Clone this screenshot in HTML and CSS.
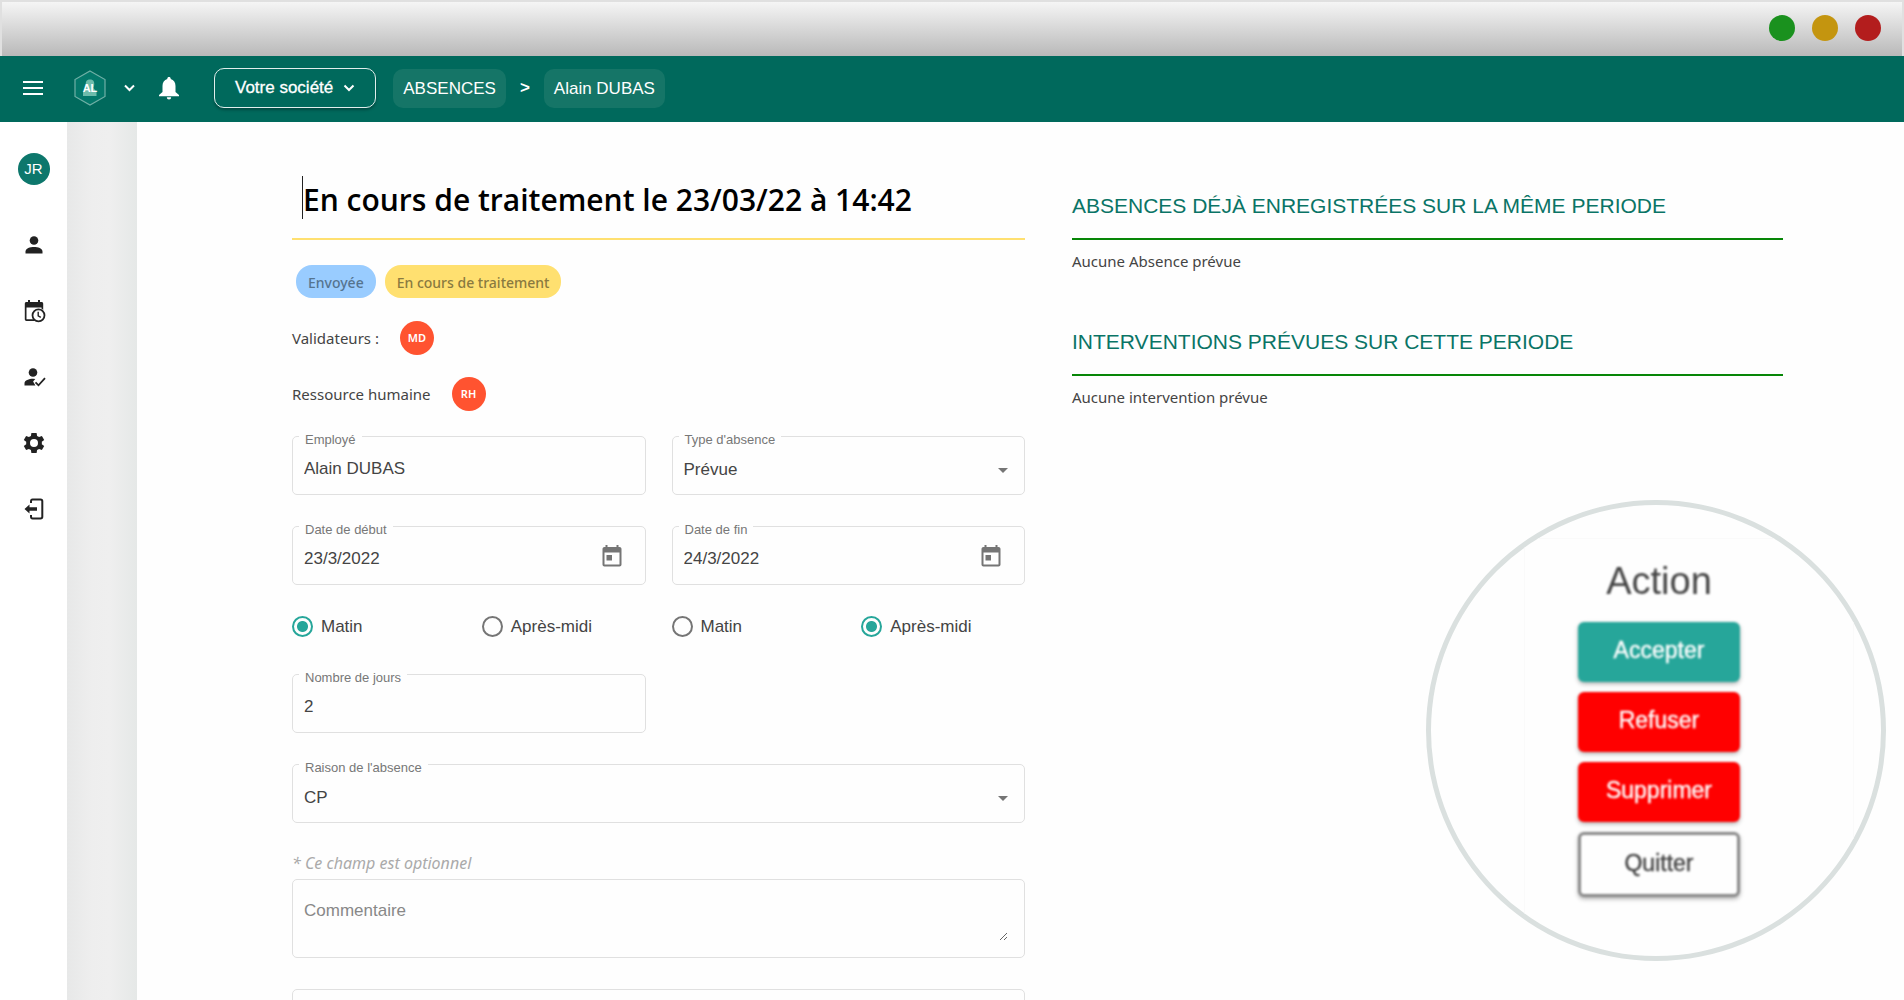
FILE: index.html
```html
<!DOCTYPE html>
<html lang="fr">
<head>
<meta charset="utf-8">
<title>Absences - Alain DUBAS</title>
<link rel="stylesheet" href="styles.css">
</head>
<body>
<div class="window">
  <div class="titlebar">
    <span class="dot dot-green"></span>
    <span class="dot dot-yellow"></span>
    <span class="dot dot-red"></span>
  </div>

  <header class="topbar">
    <button class="icon-btn menu-btn" aria-label="Menu"><svg width="20" height="14" viewBox="0 0 20 14"><path d="M0 1h20M0 7h20M0 13h20" stroke="#fff" stroke-width="2"/></svg></button>
    <button class="icon-btn logo-btn" aria-label="Compte">
      <svg width="32" height="36" viewBox="0 0 32 36">
        <path d="M16 1 31 9.500v17L16 35 1 26.500v-17z" fill="#04786a" stroke="#6fb0a6" stroke-width="1.200"/>
        <path d="M12.500 18c-2-6 0-8.500 3.500-8.500s5.500 2.500 3.500 8.500l3 4v4H9v-4z" fill="#6dbcab"/>
        <text x="16" y="22" text-anchor="middle" class="logo-text">AL</text>
      </svg>
      <svg width="11" height="8" viewBox="0 0 11 8"><path d="M1 1.500 5.500 6 10 1.500" fill="none" stroke="#fff" stroke-width="2"/></svg>
    </button>
    <button class="icon-btn bell-btn" aria-label="Notifications"><svg width="20" height="24" viewBox="0 0 20 24"><path d="M10 1c-1 0-1.700.700-1.700 1.600v.5C5.200 3.900 3.500 6.700 3.500 10v6L0 19v1.300h20V19l-3.500-3v-6c0-3.300-1.700-6.100-4.800-6.900v-.5C11.700 1.700 11 1 10 1zM7.800 21.300a2.200 2.200 0 0 0 4.400 0z" fill="#fff"/></svg></button>
    <button class="company">Votre société <svg width="12" height="8" viewBox="0 0 12 8"><path d="M1.500 1.500 6 6l4.500-4.500" fill="none" stroke="#fff" stroke-width="2"/></svg></button>
    <nav class="crumbs">
      <a class="crumb" href="#">ABSENCES</a>
      <span class="crumb-sep">&gt;</span>
      <a class="crumb" href="#">Alain DUBAS</a>
    </nav>
  </header>

  <div class="body">
    <nav class="sidebar">
      <a class="avatar" href="#">JR</a>
      <a href="#" aria-label="Employés"><svg viewBox="0 0 24 24"><circle cx="12" cy="7.500" r="4.300"/><path d="M3.500 20.500v-2c0-3.200 4.500-4.500 8.500-4.500s8.500 1.300 8.500 4.500v2z"/></svg></a>
      <a href="#" aria-label="Absences"><svg viewBox="0 0 24 24"><path fill-rule="evenodd" d="M4.500 3H6V1h2v2h8V1h2v2h1.500c1 0 1.700.700 1.700 1.700V11a6.500 6.500 0 0 0-1.700-1.300V8.500h-15v11.800h7.300c.4.700.9 1.200 1.500 1.700H4.500c-1 0-1.700-.7-1.700-1.700V4.700C2.800 3.700 3.500 3 4.500 3z"/><circle cx="16.500" cy="16.300" r="6" fill="#fff" stroke="#222" stroke-width="1.800"/><path d="M16.200 12.800v4l2.600 1.600" fill="none" stroke="#222" stroke-width="1.400"/></svg></a>
      <a href="#" aria-label="Validation"><svg viewBox="0 0 24 24"><circle cx="11" cy="7.500" r="4.300"/><path d="M2.500 20.500v-2c0-3.200 4.500-4.700 8.500-4.700l2.300.2-2.200 2.500 2.300 4z"/><path d="m13.500 17.300 3 3L23 13.200" fill="none" stroke="#222" stroke-width="1.800"/></svg></a>
      <a href="#" aria-label="Paramètres"><svg viewBox="0 0 24 24"><path fill-rule="evenodd" d="M19.900 12l-.1-1.200 2.400-1.900-2.300-4-2.800 1.200-2-1.200L14.600 2H9.400l-.5 2.900-2 1.200-2.800-1.200-2.300 4 2.400 1.900v2.400l-2.400 1.900 2.300 4 2.800-1.200 2 1.200.5 2.900h5.200l.5-2.900 2-1.200 2.800 1.200 2.300-4-2.400-1.900zM12 16a4 4 0 1 1 0-8 4 4 0 0 1 0 8z"/></svg></a>
      <a href="#" aria-label="Déconnexion"><svg viewBox="0 0 24 24"><path d="M9 6V4.500C9 3 9.500 2.500 10.500 2.500h8c1.300 0 1.800.5 1.800 1.700v15.600c0 1.200-.5 1.700-1.800 1.700h-8C9.500 21.500 9 21 9 19.500V18" fill="none" stroke="#222" stroke-width="2"/><path d="M2.500 12 7.500 7.500v2.700H15v3.600H7.500v2.700z"/></svg></a>
    </nav>
    <div class="gutter"></div>

    <main class="page">
      <form class="absence">
        <div class="title"><h1>En cours de traitement le 23/03/22 à 14:42</h1></div>
        <div class="chips"><span class="chip chip-sent">Envoyée</span><span class="chip chip-pending">En cours de traitement</span></div>
        <div class="people"><span>Validateurs :</span><span class="badge">MD</span></div>
        <div class="people"><span>Ressource humaine</span><span class="badge">RH</span></div>

        <div class="row row-first">
          <div class="field"><label for="emp">Employé</label><input id="emp" type="text" value="Alain DUBAS"></div>
          <div class="field"><label for="type">Type d'absence</label><select id="type"><option>Prévue</option></select><svg class="arrow" width="10" height="5" viewBox="0 0 10 5"><path d="M0 0h10L5 5z"/></svg></div>
        </div>
        <div class="row">
          <div class="field"><label for="start">Date de début</label><input id="start" type="text" value="23/3/2022"><svg class="cal" width="20" height="22" viewBox="0 0 20 22"><path fill-rule="evenodd" d="M3.500 0h2v2h9V0h2v2h1c1.200 0 2 .8 2 2v15.500c0 1.200-.8 2-2 2h-15c-1.200 0-2-.8-2-2V4c0-1.200.8-2 2-2h1zm-1 7.500v12h15v-12zM4.500 10h5.500v5.500H4.500z"/></svg></div>
          <div class="field"><label for="end">Date de fin</label><input id="end" type="text" value="24/3/2022"><svg class="cal" width="20" height="22" viewBox="0 0 20 22"><path fill-rule="evenodd" d="M3.500 0h2v2h9V0h2v2h1c1.200 0 2 .8 2 2v15.500c0 1.200-.8 2-2 2h-15c-1.200 0-2-.8-2-2V4c0-1.200.8-2 2-2h1zm-1 7.500v12h15v-12zM4.500 10h5.500v5.500H4.500z"/></svg></div>
        </div>
        <div class="row radios">
          <div class="pair">
            <label><input type="radio" name="from" checked>Matin</label>
            <label><input type="radio" name="from">Après-midi</label>
          </div>
          <div class="pair">
            <label><input type="radio" name="to">Matin</label>
            <label><input type="radio" name="to" checked>Après-midi</label>
          </div>
        </div>
        <div class="row">
          <div class="field"><label for="days">Nombre de jours</label><input id="days" type="text" value="2"></div>
        </div>
        <div class="field"><label for="reason">Raison de l'absence</label><select id="reason"><option>CP</option></select><svg class="arrow" width="10" height="5" viewBox="0 0 10 5"><path d="M0 0h10L5 5z"/></svg></div>
        <div class="comment">
          <p class="hint">* Ce champ est optionnel</p>
          <div class="area"><textarea aria-label="Commentaire" placeholder="Commentaire"></textarea></div>
        </div>
        <div class="area"><textarea aria-label="Réponse"></textarea></div>
      </form>

      <aside class="related">
        <section>
          <h2>ABSENCES DÉJÀ ENREGISTRÉES SUR LA MÊME PERIODE</h2>
          <p>Aucune Absence prévue</p>
        </section>
        <section>
          <h2>INTERVENTIONS PRÉVUES SUR CETTE PERIODE</h2>
          <p>Aucune intervention prévue</p>
        </section>
      </aside>
    </main>
  </div>

  <div class="lens">
    <div class="actions">
      <h3>Action</h3>
      <button class="act act-accept">Accepter</button>
      <button class="act act-danger">Refuser</button>
      <button class="act act-danger">Supprimer</button>
      <button class="act act-quit">Quitter</button>
    </div>
  </div>
</div>
</body>
</html>
```
FILE: styles.css
```css
* { box-sizing: border-box; }

body {
  margin: 0;
  font-family: "Liberation Sans", Arial, sans-serif;
  font-size: 17px;
  color: #444;
  background: #fefefe;
}

h1, h2, h3, p { margin: 0; font-weight: 400; }
a { text-decoration: none; color: inherit; }
svg { display: block; }
button, input, select, textarea { font: inherit; color: inherit; }

.window {
  position: relative;
  display: flex;
  flex-direction: column;
  height: 100vh;
  overflow: hidden;
}

/* Window frame */
.titlebar {
  flex: none;
  display: flex;
  align-items: center;
  justify-content: flex-end;
  gap: 17px;
  height: 56px;
  padding: 0 21px 2px 0;
  border: 2px solid #e0e0e0;
  border-bottom: 0;
  background: linear-gradient(#f5f5f5, #b9b9b9);
}
.dot { width: 26px; height: 26px; border-radius: 50%; }
.dot-green { background: #1a911e; }
.dot-yellow { background: #c4950f; }
.dot-red { background: #b31d1d; }

/* Application bar */
.topbar {
  flex: none;
  display: flex;
  align-items: center;
  height: 66px;
  padding: 0 0 2px 23px;
  background: #00695c;
  color: #fff;
}
.icon-btn {
  display: flex;
  align-items: center;
  gap: 18px;
  padding: 0;
  border: 0;
  background: none;
}
.menu-btn { margin-right: 31px; }
.logo-btn { margin-right: 24px; }
.bell-btn { margin-right: 35px; }
.logo-text { font-size: 11px; font-weight: 700; fill: #fff; }
.company {
  display: flex;
  align-items: center;
  gap: 10px;
  height: 40px;
  margin-right: 17px;
  padding: 0 20px;
  border: 1px solid #e0eeec;
  border-radius: 10px;
  background: transparent;
  color: #fff;
  -webkit-text-stroke: 0.3px #fff;
  box-shadow: 0 2px 3px rgba(0, 0, 0, 0.3);
}
.crumbs { display: flex; align-items: center; gap: 14px; }
.crumb {
  padding: 0 10px;
  line-height: 39px;
  border-radius: 10px;
  background: #157567;
}
.crumb-sep { font-weight: 700; }

.body { flex: 1; display: flex; min-height: 0; }

/* Side navigation */
.sidebar {
  flex: none;
  display: flex;
  flex-direction: column;
  align-items: center;
  gap: 42px;
  width: 67px;
  padding-top: 31px;
  background: #fff;
}
.sidebar svg { width: 24px; height: 24px; fill: #222; }
.avatar {
  width: 32px;
  margin-bottom: 6px;
  border-radius: 50%;
  background: #0d776c;
  color: #fff;
  font-size: 15px;
  line-height: 32px;
  text-align: center;
}
.gutter {
  flex: none;
  width: 70px;
  background: linear-gradient(90deg, #e7e8e8, #eeeeee 35%, #efefef 60%, #e5e8e7);
}

.page {
  flex: 1;
  display: grid;
  grid-template-columns: 733fr 711fr;
  gap: 47px;
  align-items: start;
  padding: 54px 121px 0 155px;
  overflow: auto;
  scrollbar-width: none;
  font-family: "Noto Sans", "Open Sans", sans-serif;
  font-size: 15px;
}

/* Absence form */
.title { padding: 0 0 19px 10px; border-bottom: 2px solid #ffe070; }
.title h1 {
  padding-top: 4px;
  border-left: 1px solid #222;
  color: #000;
  font-family: "Open Sans", "Noto Sans", sans-serif;
  font-size: 30px;
  font-weight: 600;
  line-height: 39px;
}
.chips { display: flex; gap: 9px; padding: 25px 4px 23px; }
.chip {
  padding: 2px 12px 0;
  border-radius: 16px;
  font-size: 14px;
  font-weight: 500;
  line-height: 31px;
}
.chip-sent { background: #99ccff; color: #55748f; }
.chip-pending { background: #ffe070; color: #8a7a40; }
.people { display: flex; align-items: center; gap: 21px; margin-bottom: 22px; }
.badge {
  width: 34px;
  border-radius: 50%;
  background: #ff5330;
  color: #fff;
  font-size: 11px;
  font-weight: 600;
  line-height: 34px;
  text-align: center;
}
.row {
  display: grid;
  grid-template-columns: 1fr 1fr;
  gap: 26px;
  margin-bottom: 31px;
}
.row-first { margin-top: 25px; }

.field {
  position: relative;
  display: grid;
  align-items: center;
  height: 59px;
  border: 1px solid #e0e0e0;
  border-radius: 5px;
  font-family: "Liberation Sans", Arial, sans-serif;
}
.field > * { grid-area: 1 / 1; }
.field label {
  position: absolute;
  top: -5px;
  left: 6px;
  padding: 0 6px;
  background: #fefefe;
  color: #777;
  font-size: 13px;
  line-height: 15px;
}
.field input, .field select {
  width: 100%;
  height: 100%;
  padding: 7px 11px 0;
  border: 0;
  outline: 0;
  appearance: none;
  background: transparent;
  font-size: 17px;
}
.field svg { justify-self: end; fill: #757575; pointer-events: none; }
.arrow { margin: 9px 16px 0 0; }
.cal { margin-right: 23px; }

.row.radios {
  margin-bottom: 37px;
  font-family: "Liberation Sans", Arial, sans-serif;
  font-size: 17px;
}
.pair { display: grid; grid-template-columns: 190fr 164fr; }
.pair label { display: flex; align-items: center; gap: 8px; line-height: 21px; }
.pair input {
  appearance: none;
  width: 21px;
  height: 21px;
  margin: 0;
  border: 2px solid #757575;
  border-radius: 50%;
}
.pair input:checked {
  border-color: #26a69a;
  background: radial-gradient(circle, #26a69a 5px, transparent 6px);
}

.comment { margin: 28px 0 31px; }
.hint { margin-bottom: 4px; color: #aaa; font-size: 16px; font-style: italic; line-height: 24px; }
.area {
  height: 79px;
  padding: 19px 16px 16px 11px;
  border: 1px solid #e0e0e0;
  border-radius: 5px;
}
.area textarea {
  display: block;
  width: 100%;
  height: 100%;
  padding: 2px 0 0;
  border: 0;
  outline: 0;
  background: transparent;
  font-family: "Liberation Sans", Arial, sans-serif;
  font-size: 17px;
}
.area textarea::placeholder { color: #888; }

/* Related records */
.related { display: grid; gap: 55px; padding-top: 16px; }
.related h2 {
  padding-bottom: 19px;
  border-bottom: 2px solid #078607;
  color: #0a7466;
  font-family: "Liberation Sans", Arial, sans-serif;
  font-size: 21px;
  line-height: 27px;
}
.related p { padding-top: 9px; line-height: 24px; }

/* Magnified action panel */
.lens {
  position: absolute;
  right: 18px;
  bottom: 39px;
  width: 460px;
  height: 461px;
  overflow: hidden;
  border: 5px solid #dae0df;
  border-radius: 50%;
  background: #fefefe;
}
.actions {
  display: flex;
  flex-direction: column;
  gap: 10px;
  width: 330px;
  height: 100%;
  margin: 33px 0 0 93px;
  padding: 20px 113px 0 53px;
  border: 1px solid #fafafa;
}
.actions h3 {
  margin-bottom: 9px;
  color: #444;
  font-size: 38px;
  line-height: 44px;
  text-align: center;
  filter: blur(1px);
}
.act {
  height: 60px;
  padding: 0 0 3px;
  border: 0;
  border-radius: 6px;
  color: #fff;
  font-size: 23px;
  -webkit-text-stroke: 0.4px currentColor;
  box-shadow: 0 2px 4px rgba(0, 0, 0, 0.3);
  filter: blur(1px);
}
.act-accept { background: #26a69a; }
.act-danger { background: #ff0000; }
.act-quit {
  height: 65px;
  border: 3px solid #8a8a8a;
  background: #fefefe;
  color: #444;
}
```
